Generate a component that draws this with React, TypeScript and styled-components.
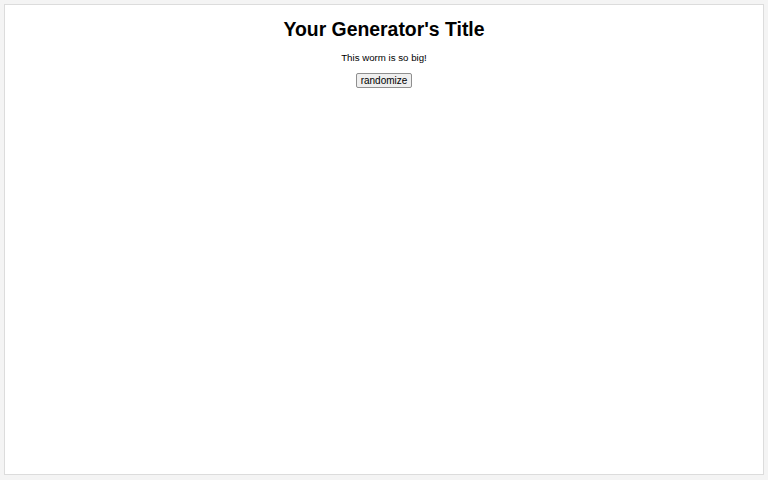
import React from 'react';
import styled, { createGlobalStyle } from 'styled-components';

const GlobalStyle = createGlobalStyle`
  html, body {
    margin: 0;
    padding: 0;
    background: #f4f4f4;
    font-family: "Liberation Sans", Arial, sans-serif;
  }
`;

const Page = styled.div`
  box-sizing: border-box;
  height: 480px;
  padding: 4px 4px 5px 4px;
`;

const Panel = styled.main`
  box-sizing: border-box;
  height: 100%;
  background: #fff;
  border: 1px solid #dcdcdc;
  display: flex;
  flex-direction: column;
  align-items: center;
  padding-top: 13px;
`;

const Title = styled.h1`
  margin: 0;
  font-size: 19.4px;
  font-weight: bold;
  color: #000;
  line-height: 22px;
`;

const Output = styled.p`
  margin: 12px 0 0;
  font-size: 9.7px;
  line-height: 12px;
  color: #000;
`;

const Button = styled.button`
  margin-top: 9px;
  font-family: "Liberation Sans", Arial, sans-serif;
  font-size: 10px;
  line-height: 11px;
  padding: 1px 4px;
  background: #efefef;
  border: 1px solid #8f8f8f;
  border-radius: 2px;
  color: #000;
`;

const App: React.FC = () => {
  return (
    <>
      <GlobalStyle />
      <Page>
        <Panel>
          <Title>Your Generator's Title</Title>
          <Output>This worm is so big!</Output>
          <Button>randomize</Button>
        </Panel>
      </Page>
    </>
  );
};

export default App;
